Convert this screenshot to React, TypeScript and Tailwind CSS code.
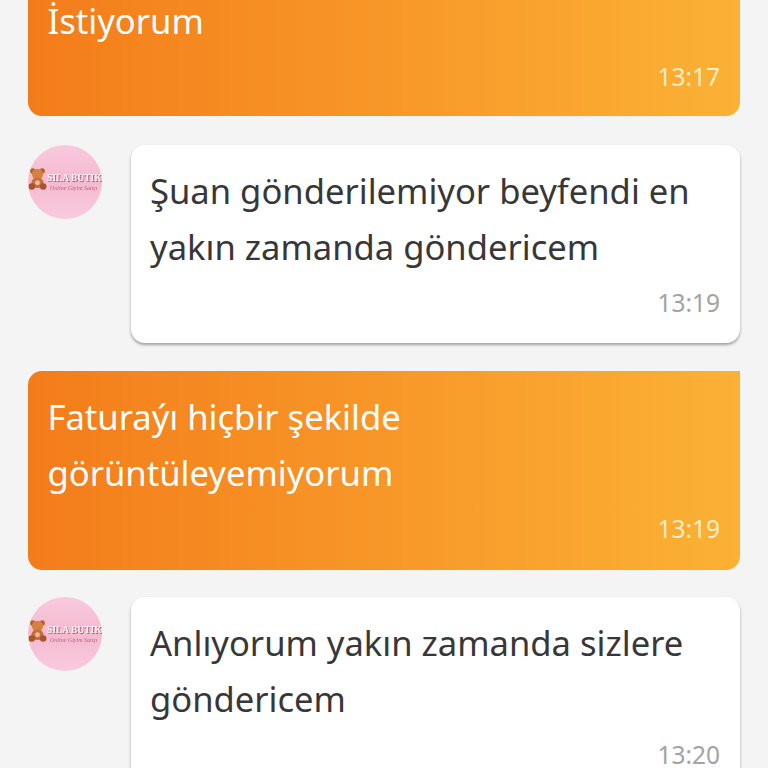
import React from 'react';

const FONT = "font-['Noto_Sans','Open_Sans',sans-serif]";

const MESSAGES = [
  { id: 1, mine: true, lines: ['İstiyorum'], time: '13:17' },
  { id: 2, mine: false, lines: ['Şuan gönderilemiyor beyfendi en', 'yakın zamanda göndericem'], time: '13:19' },
  { id: 3, mine: true, lines: ['Faturaýı hiçbir şekilde', 'görüntüleyemiyorum'], time: '13:19' },
  { id: 4, mine: false, lines: ['Anlıyorum yakın zamanda sizlere', 'göndericem'], time: '13:20' },
];

const Avatar: React.FC = () => (
  <div className="relative w-[74px] h-[74px] shrink-0 rounded-full overflow-hidden bg-gradient-to-b from-[#f8cadd] via-[#f5b9d0] to-[#f8cbde]">
    <svg className="absolute left-0 top-[22px] blur-[0.4px]" width="19" height="24" viewBox="0 0 20 24" aria-hidden="true">
      <circle cx="5" cy="3.5" r="2.8" fill="#b5622e" />
      <circle cx="15" cy="3.5" r="2.8" fill="#b5622e" />
      <circle cx="10" cy="7" r="5.8" fill="#d5813f" />
      <ellipse cx="10" cy="16" rx="6.4" ry="5.5" fill="#c46f35" />
      <circle cx="4" cy="20" r="3.4" fill="#a9552a" />
      <circle cx="16" cy="20" r="3.4" fill="#a9552a" />
      <circle cx="10" cy="16" r="2.6" fill="#efb9a8" />
    </svg>
    <div className="absolute left-[19px] top-[27px] whitespace-nowrap blur-[0.3px] font-['Liberation_Serif',serif] font-bold text-[9.5px] leading-[13px] text-[#fff4f6] [text-shadow:1px_1px_0_#a85f6c]">
      SILA BUTIK
    </div>
    <div className="absolute left-[22px] top-[40px] whitespace-nowrap blur-[0.5px] font-['Liberation_Serif',serif] italic text-[6px] leading-[7px] text-[#b5647c]">
      Online Giyim Satışı
    </div>
  </div>
);

const Bubble: React.FC<{ lines: string[]; time: string; mine: boolean; first: boolean }> = ({ lines, time, mine, first }) => (
  <div
    className={
      mine
        ? `flex-1 rounded-b-[14px] rounded-tl-[14px] bg-gradient-to-r from-[#f37c1a] to-[#fbb135] pl-[19.5px] pr-5 pt-[18px] text-white ${first ? 'pb-[21px] mb-[1px]' : 'pb-[22.5px]'}`
        : 'flex-1 rounded-[14px] bg-white pl-[19px] pr-5 pt-[18px] pb-[22.5px] text-[#37373a] shadow-[0_2px_3px_rgba(0,0,0,0.35)]'
    }
  >
    {lines.map((line) => (
      <p key={line} className="text-[34.6px] leading-[56px] whitespace-nowrap">
        {line}
      </p>
    ))}
    <div className={`mt-[10px] text-right text-[24.5px] leading-[36px] ${mine ? 'text-[#fdeec9]' : 'text-[#a3a3a3]'}`}>
      {time}
    </div>
  </div>
);

export default function App() {
  return (
    <div className={`h-[768px] w-[768px] overflow-hidden bg-[#f4f4f5] ${FONT}`}>
      <div className="mt-[-25px] flex flex-col gap-[27.8px] pl-[28px] pr-[28px]">
        {MESSAGES.map((msg, i) => (
          <div key={msg.id} className="flex items-start gap-[29px]">
            {!msg.mine && <Avatar />}
            <Bubble lines={msg.lines} time={msg.time} mine={msg.mine} first={i === 0} />
          </div>
        ))}
      </div>
    </div>
  );
}
